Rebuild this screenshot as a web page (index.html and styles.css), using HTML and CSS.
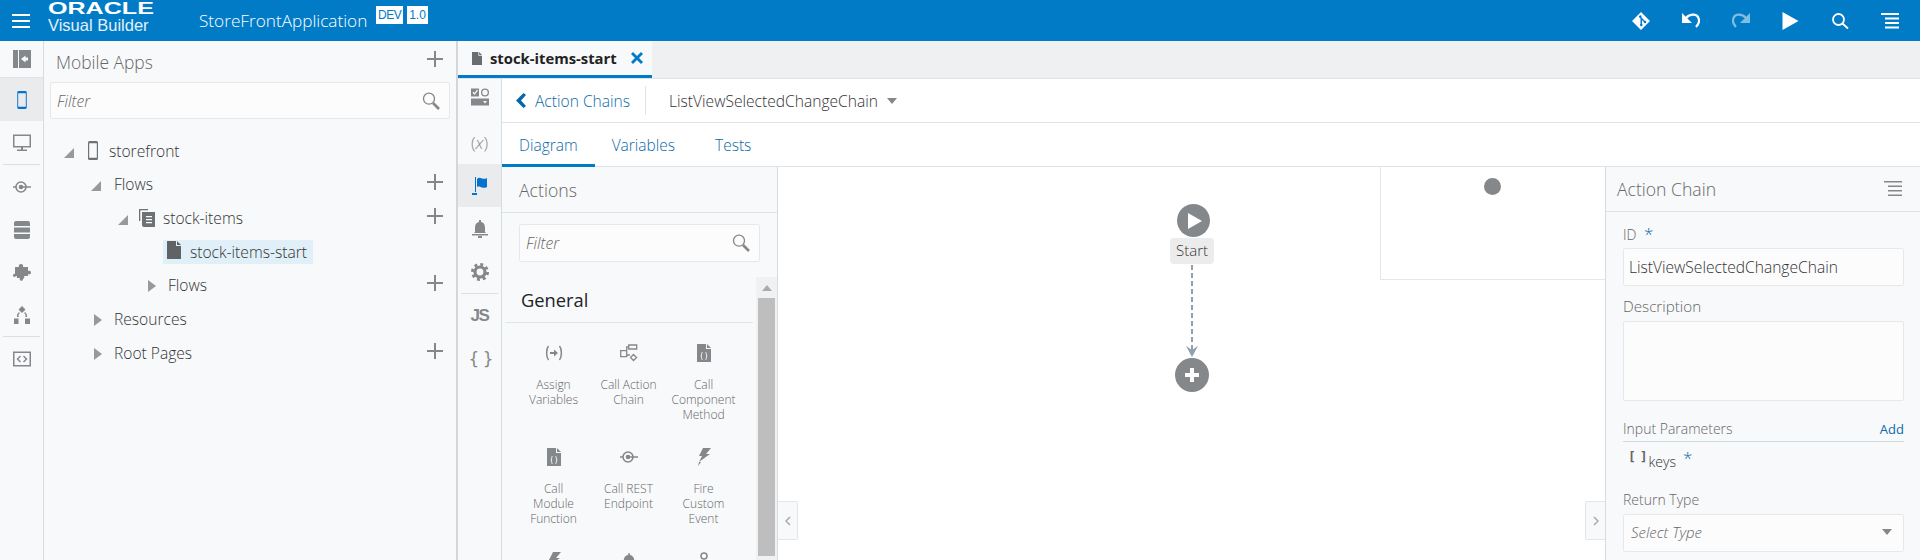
FILE: index.html
```html
<!DOCTYPE html>
<html lang="en">
<head>
    <meta charset="UTF-8">
    <title>Oracle Visual Builder</title>
    <link rel="stylesheet" href="styles.css">
</head>
<body>
    <svg class="sprites" width="0" height="0">
        <symbol id="i-plus" viewBox="0 0 16 16"><path d="M7 0h2v7h7v2H9v7H7V9H0V7h7z"/></symbol>
        <symbol id="i-search" viewBox="0 0 18 18"><path fill="none" stroke="currentColor" stroke-width="1.3" d="M7 1.2a5.5 5.5 0 1 0 0 11 5.5 5.500 0 0 0 0-11z"/><path fill="none" stroke="currentColor" stroke-width="2.6" d="M11 11l6 6"/></symbol>
        <symbol id="i-tri-down" viewBox="0 0 10 10"><path d="M10 0v10H0z"/></symbol>
        <symbol id="i-tri-right" viewBox="0 0 8 12"><path d="M0 0l8 6-8 6z"/></symbol>
        <symbol id="i-page" viewBox="0 0 14 18"><path d="M0 0h9v5h5v13H0zM10 0l4 4h-4z"/></symbol>
        <symbol id="i-code-page" viewBox="0 0 14 18"><path fill-rule="evenodd" d="M0 0h9v5h5v13H0zM10 0l4 4h-4zM5.500 8C4 8 4.500 10 4.200 11 4 11.500 3.500 11.800 3.500 12s.5.500.7 1c.3 1-.2 3 1.300 3v-1c-.8 0 0-2.500-1-3 1-.5.2-3 1-3zM8.500 8c1.500 0 1 2 1.300 3 .2.500.7.800.7 1s-.5.500-.7 1c-.3 1 .2 3-1.300 3v-1c.8 0 0-2.500 1-3-1-.5-.2-3-1-3z"/></symbol>
        <symbol id="i-bolt" viewBox="0 0 14 18"><path d="M6 0h8L9 6h4L2 14l3-6H2zM4 14l-3 4 1-4z"/></symbol>
        <symbol id="i-rest" viewBox="0 0 18 14"><circle cx="8" cy="7" r="5" fill="none" stroke="currentColor" stroke-width="1.600"/><circle cx="8" cy="7" r="2.300" fill="currentColor"/><path fill="none" stroke="currentColor" stroke-width="1.500" d="M0 7h3M8 7h10"/></symbol>
        <symbol id="i-undo" viewBox="0 0 18 18"><path d="M0 1v10h10z"/><path fill="none" stroke="currentColor" stroke-width="2.200" d="M4 6C8 1.500 16 1 17 8c.3 2.500-1 5-3 7"/></symbol>
    </svg>

    <header class="app-header">
        <button class="hamburger" aria-label="Menu"><span></span><span></span><span></span></button>
        <div class="brand">
            <div class="brand-oracle">ORACLE</div>
            <div class="brand-product">Visual Builder</div>
        </div>
        <div class="app-name">StoreFrontApplication</div>
        <span class="badge badge-dev">DEV</span>
        <span class="badge">1.0</span>
        <div class="header-actions">
            <svg class="h-icon" viewBox="0 0 18 18"><path fill-rule="evenodd" d="M9 0l9 9-9 9-9-9zM7 5l1.500 1.500v5.200a1.300 1.300 0 1 0 1.500 0V8l1.700 1.700a1.300 1.300 0 1 0 1-1L9.300 5.300A1.300 1.300 0 1 0 7 5z"/></svg>
            <svg class="h-icon"><use href="#i-undo"/></svg>
            <svg class="h-icon h-icon-off"><use href="#i-undo"/></svg>
            <svg class="h-icon h-icon-play" viewBox="0 0 16 18"><path d="M0 0l16 9-16 9z"/></svg>
            <svg class="h-icon" viewBox="0 0 18 18"><path fill="none" stroke="#fff" stroke-width="1.800" d="M7.500 2a5.500 5.500 0 1 0 0 11 5.500 5.500 0 0 0 0-11zM11.500 11.500l5.500 5"/></svg>
            <svg class="h-icon" viewBox="0 0 18 16"><path d="M0 0h18v2H0zM4 4.500h14v2H4zM4 9h14v2H4zM4 13.500h14v2H4z"/></svg>
        </div>
    </header>

    <div class="workspace">
        <nav class="nav-rail">
            <div class="rail-item rail-item-first">
                <svg class="rail-icon" viewBox="0 0 18 18"><path fill-rule="evenodd" d="M0 0h5v18H0zM6 0h12v18H6zM8 9l4.500 3.500V10.500H15v-3h-2.500V5.500z"/></svg>
            </div>
            <div class="rail-item rail-item-on">
                <svg class="rail-icon" viewBox="0 0 10 19"><path fill-rule="evenodd" d="M1.500 0h7A1.500 1.500 0 0 1 10 1.500v16A1.500 1.500 0 0 1 8.500 19h-7A1.500 1.500 0 0 1 0 17.500v-16A1.500 1.500 0 0 1 1.500 0zM1 2.500v14h8v-14z"/></svg>
            </div>
            <div class="rail-item">
                <svg class="rail-icon" viewBox="0 0 18 17"><path fill-rule="evenodd" d="M0 0h18v13H0zM1.500 1.500v10h15v-10zM8 13h2v2h4v1.500H4V15h4z"/></svg>
            </div>
            <div class="rail-divider"></div>
            <div class="rail-item">
                <svg class="rail-icon" viewBox="0 0 18 14"><use href="#i-rest"/></svg>
            </div>
            <div class="rail-item">
                <svg class="rail-icon" viewBox="0 0 16 18"><path d="M2 0h12q2 0 2 2v3H0V2q0-2 2-2zM0 6.500h16v5H0zM0 13h16v3q0 2-2 2H2q-2 0-2-2z"/></svg>
            </div>
            <div class="rail-item">
                <svg class="rail-icon" viewBox="0 0 18 18"><path d="M2 3h4c-.5-1.500 0-3 2-3s2.500 1.500 2 3h5v4c1-.5 3-.5 3 1.500s-2 2.500-3 1.500v2h-4c.5 1 .5 2-.5 2.500L9 17l-1.500-.5c-1-.5-1-1.500-.5-2.500H4v-2c-1 .5-4 1.500-4 0s1-2.500 2-2z"/></svg>
            </div>
            <div class="rail-item rail-item-short">
                <svg class="rail-icon" viewBox="0 0 16 18"><path d="M8 0l3.500 3.500L8 7 4.500 3.500zM0 12.500h4.500V18H0zM11 12.500h5V18h-5zM3 8.500L5 6l.8 1-1.500 2 .5 2H3zM13 8.500L11 6l-.8 1 1.500 2-.5 2H13z"/></svg>
            </div>
            <div class="rail-divider"></div>
            <div class="rail-item">
                <svg class="rail-icon" viewBox="0 0 18 15"><path fill-rule="evenodd" d="M0 0h18v15H0zM1.500 1.500v12h15v-12zM7 4L3.500 7.500 7 11l1-1-2.500-2.500L8 5zM11 4l-1 1 2.500 2.500L10 10l1 1 3.500-3.500z"/></svg>
            </div>
        </nav>

        <aside class="side-panel">
            <div class="side-title">
                <span>Mobile Apps</span>
                <svg class="plus"><use href="#i-plus"/></svg>
            </div>
            <div class="filter side-filter">
                <input type="text" placeholder="Filter">
                <svg class="filter-icon"><use href="#i-search"/></svg>
            </div>
            <ul class="tree">
                <li class="tree-row">
                    <svg class="twisty twisty-1"><use href="#i-tri-down"/></svg>
                    <svg class="tree-phone" viewBox="0 0 10 19"><path fill-rule="evenodd" d="M1.500 0h7A1.500 1.500 0 0 1 10 1.500v16A1.500 1.500 0 0 1 8.500 19h-7A1.500 1.500 0 0 1 0 17.500v-16A1.500 1.500 0 0 1 1.500 0zM1.200 2.200v14.600h7.600V2.200z"/></svg>
                    <span class="tree-label tree-label-root">storefront</span>
                </li>
                <li class="tree-row">
                    <svg class="twisty twisty-2"><use href="#i-tri-down"/></svg>
                    <span class="tree-label tree-label-2">Flows</span>
                    <svg class="plus"><use href="#i-plus"/></svg>
                </li>
                <li class="tree-row">
                    <svg class="twisty twisty-3"><use href="#i-tri-down"/></svg>
                    <svg class="tree-flow" viewBox="0 0 16 18"><path fill-rule="evenodd" d="M0 0h9v1.300H1.300V12H0zM3 3h13v15H5q-2 0-2-2zM7 7v1.300h6V7zM7 10v1.300h6V10zM7 13v1.300h6V13z"/></svg>
                    <span class="tree-label tree-label-flow">stock-items</span>
                    <svg class="plus"><use href="#i-plus"/></svg>
                </li>
                <li class="tree-row">
                    <div class="tree-selected">
                        <svg class="tree-page"><use href="#i-page"/></svg>
                        <span>stock-items-start</span>
                    </div>
                </li>
                <li class="tree-row">
                    <svg class="twisty-r twisty-r-3"><use href="#i-tri-right"/></svg>
                    <span class="tree-label tree-label-sub">Flows</span>
                    <svg class="plus"><use href="#i-plus"/></svg>
                </li>
                <li class="tree-row">
                    <svg class="twisty-r twisty-r-2"><use href="#i-tri-right"/></svg>
                    <span class="tree-label tree-label-2b">Resources</span>
                </li>
                <li class="tree-row">
                    <svg class="twisty-r twisty-r-2"><use href="#i-tri-right"/></svg>
                    <span class="tree-label tree-label-2b">Root Pages</span>
                    <svg class="plus"><use href="#i-plus"/></svg>
                </li>
            </ul>
        </aside>

        <main class="editor">
            <div class="tab-strip">
                <div class="file-tab">
                    <svg class="file-tab-icon"><use href="#i-page"/></svg>
                    <span>stock-items-start</span>
                    <svg class="file-tab-close" viewBox="0 0 12 12"><path d="M2 0l4 4 4-4 2 2-4 4 4 4-2 2-4-4-4 4-2-2 4-4-4-4z"/></svg>
                </div>
            </div>
            <div class="editor-body">
                <nav class="tool-rail">
                    <div class="rail-item rail-item-top">
                        <svg class="rail-icon" viewBox="0 0 18 17"><path fill-rule="evenodd" d="M0 0h8v8H0zM1.500 4L3.500 6.500 7 2 6 1.300 3.500 4.500 2.500 3.300zM14 0a4 4 0 1 1 0 8 4 4 0 0 1 0-8zm0 1.300a2.700 2.700 0 1 0 0 5.400 2.700 2.700 0 0 0 0-5.400zM0 10h18v7H0zM12 12.500l2 2.500 2-2.500z"/></svg>
                    </div>
                    <div class="rail-item rail-text rail-text-var">(<i>x</i>)</div>
                    <div class="rail-item rail-item-on">
                        <svg class="rail-icon" viewBox="0 0 16 18"><path d="M3 0h1v15H3zM5 2c2-2 3-1 5-.5s3 .5 5-.5v9c-2 1-3 1-5 .5S7 9 5 10zM0 16h5v2H0z"/></svg>
                    </div>
                    <div class="rail-item">
                        <svg class="rail-icon" viewBox="0 0 16 18"><path d="M7 0h2v2c3 .5 4 3 4 6v4l1 1H2l1-1V8c0-3 1-5.500 4-6zM0 14h16v1.500H0zM6 16h4v2H6z"/></svg>
                    </div>
                    <div class="rail-item">
                        <svg class="rail-icon" viewBox="0 0 18 18"><circle cx="9" cy="9" r="5" fill="none" stroke="currentColor" stroke-width="3.200"/><circle cx="9" cy="9" r="7.600" fill="none" stroke="currentColor" stroke-width="2.800" stroke-dasharray="3 2.970"/></svg>
                    </div>
                    <div class="rail-divider"></div>
                    <div class="rail-item rail-text rail-text-js">JS</div>
                    <div class="rail-item rail-text rail-text-braces">{ }</div>
                </nav>

                <div class="chain">
                    <div class="crumbs">
                        <a class="crumb-back">
                            <svg class="crumb-chevron" viewBox="0 0 12 15"><path d="M7.500 0L10 2 5 7.500 10 13l-2.500 2L0 7.500z"/></svg>
                            Action Chains
                        </a>
                        <div class="crumb-sep"></div>
                        <span class="crumb-name">ListViewSelectedChangeChain</span>
                        <svg class="caret" viewBox="0 0 10 6"><path d="M0 0h10L5 6z"/></svg>
                    </div>
                    <div class="subtabs">
                        <div class="subtab subtab-on">Diagram</div>
                        <div class="subtab">Variables</div>
                        <div class="subtab subtab-tests">Tests</div>
                    </div>
                    <div class="chain-body">
                        <section class="actions">
                            <div class="actions-title">Actions</div>
                            <div class="filter actions-filter">
                                <input type="text" placeholder="Filter">
                                <svg class="filter-icon"><use href="#i-search"/></svg>
                            </div>
                            <div class="palette">
                                <div class="palette-list">
                                    <h3 class="palette-heading">General</h3>
                                    <div class="palette-grid">
                                        <div class="palette-item">
                                            <svg class="p-icon p-icon-wide" viewBox="0 0 18 16"><path fill="none" stroke="currentColor" stroke-width="1.500" d="M3.500 1C1 4 1 12 3.500 15M14.500 1C17 4 17 12 14.500 15"/><path d="M5 7h4V4.500L13 8l-4 3.500V9H5z"/></svg>
                                            <span>Assign<br>Variables</span>
                                        </div>
                                        <div class="palette-item">
                                            <svg class="p-icon p-icon-wide" viewBox="0 0 18 18"><path fill="none" stroke="currentColor" stroke-width="1.300" d="M.7 6.700h6v6h-6zM8.700 1h8v4h-8zM6.700 8V3h2M6.700 11H10M13.500 10.500l3 3-3 3-3-3z"/></svg>
                                            <span>Call Action<br>Chain</span>
                                        </div>
                                        <div class="palette-item">
                                            <svg class="p-icon"><use href="#i-code-page"/></svg>
                                            <span>Call<br>Component<br>Method</span>
                                        </div>
                                        <div class="palette-item">
                                            <svg class="p-icon"><use href="#i-code-page"/></svg>
                                            <span>Call<br>Module<br>Function</span>
                                        </div>
                                        <div class="palette-item">
                                            <svg class="p-icon p-icon-wide"><use href="#i-rest"/></svg>
                                            <span>Call REST<br>Endpoint</span>
                                        </div>
                                        <div class="palette-item">
                                            <svg class="p-icon"><use href="#i-bolt"/></svg>
                                            <span>Fire<br>Custom<br>Event</span>
                                        </div>
                                        <div class="palette-item">
                                            <svg class="p-icon"><use href="#i-bolt"/></svg>
                                        </div>
                                        <div class="palette-item">
                                            <svg class="p-icon" viewBox="0 0 16 18"><path d="M7 0h2v2c3 .5 5 3 5 6v4H2V8c0-3 2-5.500 5-6z"/></svg>
                                        </div>
                                        <div class="palette-item">
                                            <svg class="p-icon" viewBox="0 0 14 18"><path fill="none" stroke="currentColor" stroke-width="1.500" d="M7 1a3 3 0 1 0 0 6 3 3 0 0 0 0-6z"/></svg>
                                        </div>
                                    </div>
                                </div>
                                <div class="scrollbar">
                                    <div class="scroll-up"></div>
                                    <div class="scroll-thumb"></div>
                                </div>
                            </div>
                        </section>

                        <section class="canvas">
                            <button class="handle handle-left" aria-label="Collapse actions">
                                <svg viewBox="0 0 6 10"><path fill="none" stroke="currentColor" stroke-width="1.500" d="M5 1L1 5l4 4"/></svg>
                            </button>
                            <div class="minimap"><div class="minimap-dot"></div></div>
                            <div class="node-start">
                                <svg viewBox="0 0 14 16"><path d="M0 0l14 8-14 8z"/></svg>
                            </div>
                            <div class="node-label">Start</div>
                            <svg class="edge" viewBox="0 0 12 92">
                                <path fill="none" stroke="#8fa0ae" stroke-width="2" stroke-dasharray="5 3" d="M6 0v86"/>
                                <path fill="#8fa0ae" d="M0 81l6 4 6-4-6 11z"/>
                            </svg>
                            <div class="node-add">
                                <svg viewBox="0 0 14 14"><path d="M5 0h4v5h5v4H9v5H5V9H0V5h5z"/></svg>
                            </div>
                            <button class="handle handle-right" aria-label="Collapse properties">
                                <svg viewBox="0 0 6 10"><path fill="none" stroke="currentColor" stroke-width="1.500" d="M1 1l4 4-4 4"/></svg>
                            </button>
                        </section>

                        <section class="props">
                            <div class="props-title">
                                <span>Action Chain</span>
                                <svg class="props-menu" viewBox="0 0 18 16"><path d="M0 0h18v1.500H0zM4 4.500h14V6H4zM4 9h14v1.500H4zM4 13.500h14V15H4z"/></svg>
                            </div>
                            <div class="props-form">
                                <label class="field-label">ID <span class="req">*</span></label>
                                <input class="field-input" type="text" value="ListViewSelectedChangeChain">
                                <label class="field-label field-gap">Description</label>
                                <textarea class="field-area"></textarea>
                                <div class="params-head">
                                    <span>Input Parameters</span>
                                    <a class="add-link">Add</a>
                                </div>
                                <div class="param">
                                    <span class="param-brackets">[ ]</span>
                                    <span class="param-name">keys</span>
                                    <span class="req">*</span>
                                </div>
                                <label class="field-label field-gap-type">Return Type</label>
                                <div class="field-select">
                                    <span>Select Type</span>
                                    <svg class="caret" viewBox="0 0 10 6"><path d="M0 0h10L5 6z"/></svg>
                                </div>
                            </div>
                        </section>
                    </div>
                </div>
            </div>
        </main>
    </div>
</body>
</html>
```

FILE: styles.css
```css
:root {
    --brand: #027bc7;
    --panel: #f8f9fb;
    --line: #dfe4e8;
    --icon: #85888b;
    --text: #333;
    --muted: #666;
    --link: #0a6aa8;
}

* {
    box-sizing: border-box;
    margin: 0;
    padding: 0;
}

body {
    width: 1920px;
    height: 560px;
    overflow: hidden;
    background: #fff;
    color: var(--text);
    font-family: 'Open Sans', 'Noto Sans', sans-serif;
    font-size: 14px;
    font-weight: 300;
}

.sprites {
    position: absolute;
}

button {
    background: none;
    border: none;
}

input,
textarea {
    font: inherit;
    color: inherit;
    border: none;
    outline: none;
    background: none;
    resize: none;
}

/* Шапка */
.app-header {
    height: 41px;
    background: var(--brand);
    color: #fff;
    display: flex;
    align-items: center;
}

.hamburger {
    width: 18px;
    margin-left: 12px;
    display: flex;
    flex-direction: column;
    gap: 4px;
}

.hamburger span {
    height: 2px;
    background: #fff;
}

.brand {
    margin-left: 18px;
    width: 151px;
    height: 41px;
    font-family: 'Liberation Sans', sans-serif;
}

.brand-oracle {
    font-size: 16.500px;
    line-height: 16px;
    font-weight: 700;
    transform: scaleX(1.520);
    transform-origin: left top;
}

.brand-product {
    font-size: 16.500px;
    line-height: 17px;
    margin-top: 1px;
    font-weight: 400;
    color: #e3f0f9;
}

.app-name {
    font-size: 17.200px;
    width: 177px;
}

.badge {
    height: 18px;
    background: #fff;
    color: var(--brand);
    font-family: 'Liberation Sans', sans-serif;
    font-size: 12px;
    font-weight: 400;
    line-height: 18px;
    padding: 0 2px;
    margin-bottom: 11px;
    margin-right: 4px;
}

.badge-dev {
    letter-spacing: -0.500px;
}

.header-actions {
    margin-left: auto;
    margin-right: 21px;
    display: flex;
    align-items: center;
    gap: 32px;
}

.h-icon {
    width: 18px;
    height: 18px;
    fill: #fff;
    color: #fff;
    display: block;
}

.h-icon-off {
    fill: #7fbde3;
    color: #7fbde3;
    transform: scaleX(-1);
}

.h-icon-play {
    width: 17px;
}

/* Рабочая область */
.workspace {
    display: flex;
    height: 519px;
}

.nav-rail {
    width: 44px;
    background: var(--panel);
    border-right: 1px solid #d5dde3;
    flex: none;
}

.rail-item {
    height: 43px;
    display: flex;
    align-items: center;
    justify-content: center;
    color: var(--icon);
}

.rail-item-first {
    height: 37px;
    border-bottom: 1px solid #e0e3e6;
}

.rail-item-top {
    height: 42px;
    padding-bottom: 6px;
}

.rail-item-short {
    height: 42px;
}

.rail-item-on {
    background: #e9ebed;
    color: #0572ce;
}

.rail-icon {
    width: 18px;
    height: 18px;
    fill: currentColor;
}

.rail-divider {
    height: 1px;
    margin: 0 3px;
    background: #dcdfe2;
}

.rail-text {
    font-weight: 700;
}

.rail-text-var {
    font-size: 17px;
    font-weight: 300;
}

.rail-text-js {
    font-family: 'Liberation Sans', sans-serif;
    font-size: 17px;
    letter-spacing: -1.500px;
}

.rail-text-braces {
    font-family: 'DejaVu Sans Mono', monospace;
    font-size: 17px;
    font-weight: 400;
    letter-spacing: -3px;
}

/* Левая панель */
.side-panel {
    width: 414px;
    flex: none;
    background: var(--panel);
    border-right: 2px solid #d3d6da;
}

.side-title {
    height: 41px;
    padding: 0 13px 0 12px;
    display: flex;
    align-items: center;
    justify-content: space-between;
    font-size: 17.400px;
    color: var(--muted);
}

.plus {
    width: 16px;
    height: 16px;
    fill: var(--icon);
    flex: none;
}

.side-title .plus {
    margin-top: -5px;
}

.filter {
    display: flex;
    align-items: center;
    background: #fcfcfd;
    border: 1px solid #e6e9ec;
    border-radius: 2px;
}

.filter input {
    flex: 1;
    min-width: 0;
    padding-left: 6px;
    font-style: italic;
    font-size: 15.600px;
}

.filter input::placeholder {
    color: #666;
    opacity: 1;
}

.filter-icon {
    width: 18px;
    height: 18px;
    margin-right: 9px;
    color: var(--icon);
    flex: none;
}

.side-filter {
    height: 37px;
    margin: 0 6px;
}

.tree {
    list-style: none;
    margin-top: 15px;
    padding-right: 13px;
    font-size: 15.600px;
}

.tree-row {
    height: 33.670px;
    display: flex;
    align-items: center;
    position: relative;
}

.tree-row .plus {
    margin-left: auto;
    margin-top: -4px;
}

.twisty {
    width: 10px;
    height: 10px;
    fill: #999;
    flex: none;
    margin-top: 4px;
}

.twisty-1 { margin-left: 20px; }
.twisty-2 { margin-left: 47px; }
.twisty-3 { margin-left: 74px; }

.twisty-r {
    width: 8px;
    height: 12px;
    fill: #999;
    flex: none;
    margin-top: 2px;
}

.twisty-r-2 { margin-left: 50px; }
.twisty-r-3 { margin-left: 104px; }

.tree-phone {
    width: 10px;
    height: 19px;
    margin-left: 14px;
    fill: #6f7275;
    flex: none;
}

.tree-flow {
    width: 16px;
    height: 18px;
    margin-left: 11px;
    fill: #6f7275;
    flex: none;
}

.tree-label-root { margin-left: 11px; }
.tree-label-2 { margin-left: 13px; }
.tree-label-flow { margin-left: 8px; }
.tree-label-sub { margin-left: 12px; }
.tree-label-2b { margin-left: 12px; }

.tree-selected {
    margin-left: 119px;
    width: 150px;
    height: 24px;
    background: #e0eff8;
    display: flex;
    align-items: center;
}

.tree-page {
    width: 14px;
    height: 18px;
    margin-left: 4px;
    margin-right: 9px;
    margin-top: -3px;
    fill: #5f6366;
}

/* Редактор */
.editor {
    flex: 1;
    min-width: 0;
    display: flex;
    flex-direction: column;
}

.tab-strip {
    height: 37px;
    background: #eff0f2;
    flex: none;
}

.file-tab {
    width: 194px;
    height: 37px;
    background: var(--panel);
    border-bottom: 3px solid var(--brand);
    display: flex;
    align-items: center;
    padding-left: 14px;
    font-weight: 700;
    font-size: 14.800px;
    color: #222;
}

.file-tab-icon {
    width: 10px;
    height: 13px;
    fill: #6a6d70;
    margin-right: 8px;
}

.file-tab-close {
    width: 12px;
    height: 12px;
    margin-left: 14px;
    fill: var(--brand);
}

.editor-body {
    flex: 1;
    min-height: 0;
    display: flex;
}

.tool-rail {
    width: 44px;
    flex: none;
    background: var(--panel);
    border-right: 1px solid #d5dde3;
    border-top: 1px solid var(--line);
}

.tool-rail .rail-item-on {
    width: 43px;
}

.chain {
    flex: 1;
    min-width: 0;
    display: flex;
    flex-direction: column;
}

.crumbs {
    height: 45px;
    flex: none;
    display: flex;
    align-items: center;
    padding-left: 14px;
    border-top: 1px solid var(--line);
    border-bottom: 1px solid var(--line);
    font-size: 15.600px;
}

.crumb-back {
    display: flex;
    align-items: center;
    gap: 7px;
    color: var(--link);
}

.crumb-chevron {
    width: 12px;
    height: 15px;
    fill: #0567a8;
}

.crumb-sep {
    width: 1px;
    height: 29px;
    margin: 0 23px 0 15px;
    background: #dfe3e6;
}

.caret {
    width: 10px;
    height: 6px;
    fill: var(--icon);
    margin-left: 9px;
}

.subtabs {
    height: 44px;
    flex: none;
    display: flex;
    border-bottom: 1px solid var(--line);
}

.subtab {
    padding: 0 17px;
    line-height: 44px;
    color: var(--link);
    font-size: 15.500px;
}

.subtab-on {
    height: 44px;
    border-bottom: 3px solid var(--brand);
}

.subtab-tests {
    margin-left: 6px;
}

.chain-body {
    flex: 1;
    min-height: 0;
    display: flex;
}

/* Панель действий */
.actions {
    width: 276px;
    flex: none;
    display: flex;
    flex-direction: column;
    background: var(--panel);
    border-right: 1px solid #d5dde3;
}

.actions-title {
    height: 46px;
    flex: none;
    padding: 0 17px;
    line-height: 46px;
    font-size: 17.700px;
    color: var(--muted);
    border-bottom: 1px solid var(--line);
}

.actions-filter {
    height: 38px;
    flex: none;
    margin: 11px 17px 15px;
}

.palette {
    flex: 1;
    min-height: 0;
    overflow: hidden;
    display: flex;
}

.palette-list {
    width: 251px;
    padding-left: 3px;
    flex: none;
}

.palette-heading {
    height: 46px;
    padding-left: 16px;
    line-height: 46px;
    font-size: 18.300px;
    font-weight: 400;
    color: #222;
    border-bottom: 1px solid var(--line);
}

.palette-grid {
    display: grid;
    grid-template-columns: repeat(3, 75px);
    grid-auto-rows: 104px;
    padding: 21px 0 0 11px;
}

.palette-item {
    display: flex;
    flex-direction: column;
    align-items: center;
    text-align: center;
    font-size: 12px;
    line-height: 15px;
    color: #666;
}

.p-icon {
    width: 14px;
    height: 18px;
    margin-bottom: 15px;
    fill: currentColor;
    color: var(--icon);
    flex: none;
}

.p-icon-wide {
    width: 18px;
}

.scrollbar {
    width: 21px;
    background: #f0f1f3;
    margin-left: 3px;
    padding: 0 2px;
}

.scroll-up {
    width: 0;
    height: 0;
    margin: 8px auto 7px;
    border: 5px solid transparent;
    border-top: none;
    border-bottom: 6px solid #a9abad;
}

.scroll-thumb {
    height: 258px;
    background: #bebebe;
}

/* Диаграмма */
.canvas {
    flex: 1;
    position: relative;
    min-width: 0;
}

.minimap {
    position: absolute;
    right: 0;
    top: 0;
    width: 225px;
    height: 113px;
    background: #fff;
    border: 1px solid #e4e7ea;
    border-top: none;
    border-right: none;
}

.minimap-dot {
    position: absolute;
    left: 103px;
    top: 11px;
    width: 17px;
    height: 17px;
    border-radius: 50%;
    background: #85888b;
}

.node-start {
    position: absolute;
    left: 399px;
    top: 37px;
    width: 33px;
    height: 33px;
    border-radius: 50%;
    background: #85888b;
    display: flex;
    align-items: center;
    justify-content: center;
}

.node-start svg {
    width: 14px;
    height: 16px;
    margin-left: 2px;
    fill: #fff;
}

.node-label {
    position: absolute;
    left: 392px;
    top: 71px;
    width: 44px;
    height: 26px;
    background: #ececec;
    border-radius: 4px;
    text-align: center;
    line-height: 25px;
    font-size: 15px;
    color: #333;
}

.edge {
    position: absolute;
    left: 408px;
    top: 98px;
    width: 12px;
    height: 92px;
}

.node-add {
    position: absolute;
    left: 397px;
    top: 191px;
    width: 34px;
    height: 34px;
    border-radius: 50%;
    background: #85888b;
    display: flex;
    align-items: center;
    justify-content: center;
}

.node-add svg {
    width: 14px;
    height: 14px;
    fill: #fff;
}

.handle {
    position: absolute;
    top: 334px;
    width: 20px;
    height: 39px;
    background: #f8f9fb;
    border: 1px solid #e4e7ea;
    color: #a6a9ac;
    display: flex;
    align-items: center;
    justify-content: center;
}

.handle svg {
    width: 6px;
    height: 10px;
}

.handle-left {
    left: 0;
    border-left: none;
    border-radius: 0 2px 2px 0;
}

.handle-right {
    right: 0;
    border-right: none;
    border-radius: 2px 0 0 2px;
}

/* Свойства */
.props {
    width: 315px;
    flex: none;
    background: var(--panel);
    border-left: 1px solid #d5dde3;
}

.props-title {
    height: 45px;
    display: flex;
    align-items: center;
    justify-content: space-between;
    padding: 0 18px 0 11px;
    font-size: 17.600px;
    color: var(--muted);
    border-bottom: 1px solid var(--line);
}

.props-menu {
    width: 18px;
    height: 16px;
    fill: var(--icon);
}

.props-form {
    padding: 10px 16px 0 17px;
}

.field-label {
    display: block;
    height: 26px;
    line-height: 26px;
    color: var(--muted);
}

.req {
    color: #0a6aa8;
    font-size: 17px;
    margin-left: 4px;
    line-height: 14px;
}

.field-input,
.field-area,
.field-select {
    display: block;
    width: 100%;
    background: #fcfcfd;
    border: 1px solid #e6e9ec;
    border-radius: 2px;
}

.field-input {
    height: 38px;
    padding: 0 5px;
    font-size: 15.600px;
}

.field-gap {
    margin-top: 8px;
    height: 27px;
    line-height: 24px;
    font-size: 15.200px;
}

.field-area {
    height: 80px;
}

.params-head {
    margin-top: 15px;
    height: 26px;
    display: flex;
    justify-content: space-between;
    align-items: center;
    color: var(--muted);
    border-bottom: 1px solid #cfdbe3;
}

.add-link {
    color: var(--link);
    font-size: 13px;
    font-weight: 400;
}

.param {
    display: flex;
    align-items: center;
    gap: 3px;
    height: 32px;
    padding-left: 5px;
    color: var(--text);
}

.param-name {
    margin-top: 6px;
}

.param-brackets {
    font-family: 'DejaVu Sans Mono', monospace;
    font-weight: 700;
    font-size: 13px;
    color: var(--muted);
    letter-spacing: -2px;
    margin-top: -4px;
}

.field-gap-type {
    margin-top: 13px;
    height: 27px;
}

.field-select {
    height: 38px;
    display: flex;
    align-items: center;
    justify-content: space-between;
    padding: 0 11px 2px 7px;
    font-style: italic;
    font-size: 15px;
    color: var(--muted);
}
```
